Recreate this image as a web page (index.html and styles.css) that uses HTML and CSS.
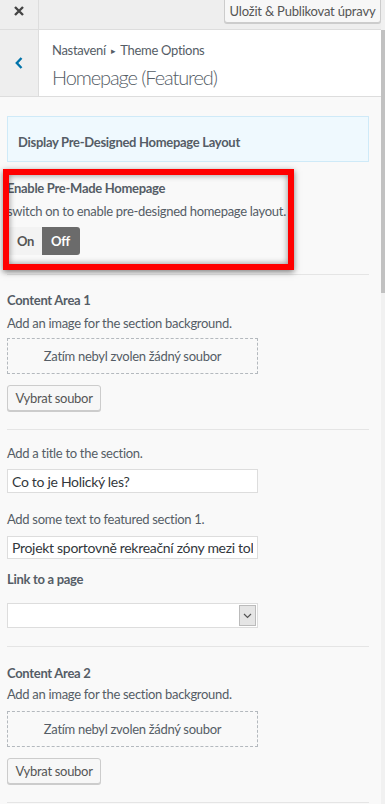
FILE: index.html
```html
<!DOCTYPE html>
<html lang="cs">
<head>
<meta charset="utf-8">
<title>Customizer</title>
<link rel="stylesheet" href="styles.css">
</head>
<body>
<div class="app">
  <div class="topbar">
    <button class="close" aria-label="Zavřít">
      <svg width="12" height="12" viewBox="0 0 12 12"><path d="M2 2 L10 10 M10 2 L2 10" stroke="#444" stroke-width="2.4" stroke-linecap="butt"/></svg>
    </button>
    <div class="topbar-fill"></div>
    <button class="publish">Uložit &amp; Publikovat úpravy</button>
  </div>
  <div class="header">
    <button class="back" aria-label="Zpět">
      <svg width="10" height="14" viewBox="0 0 10 14"><path d="M7.5 2 L2.8 7 L7.5 12" fill="none" stroke="#0073aa" stroke-width="2.4"/></svg>
    </button>
    <div class="header-text">
      <div class="crumb">Nastavení <span class="tri">▸</span> Theme Options</div>
      <div class="title">Homepage (Featured)</div>
    </div>
  </div>
  <div class="panel">
    <div class="notice">Display Pre-Designed Homepage Layout</div>

    <div class="group g-enable">
      <div class="label">Enable Pre-Made Homepage</div>
      <div class="desc d-tight">switch on to enable pre-designed homepage layout.</div>
      <div class="toggle"><span class="on">On</span><span class="off">Off</span></div>
      <div class="annot"></div>
    </div>

    <div class="group g-area1">
      <div class="label">Content Area 1</div>
      <div class="desc d-tight">Add an image for the section background.</div>
      <div class="drop">Zatím nebyl zvolen žádný soubor</div>
      <button class="btn">Vybrat soubor</button>
    </div>

    <div class="group g-fields">
      <div class="desc">Add a title to the section.</div>
      <input class="field f1" type="text" value="Co to je Holický les?">
      <div class="desc d-second">Add some text to featured section 1.</div>
      <input class="field f2" type="text" value="Projekt sportovně rekreační zóny mezi tolerancí">
      <div class="label l-link">Link to a page</div>
      <div class="select"><span class="select-val"></span><span class="select-arrow"><svg width="9" height="6" viewBox="0 0 9 6"><path d="M1 1 L4.5 4.5 L8 1" fill="none" stroke="#555" stroke-width="1.2"/></svg></span></div>
    </div>

    <div class="group g-area2">
      <div class="label">Content Area 2</div>
      <div class="desc d-tighter">Add an image for the section background.</div>
      <div class="drop drop2">Zatím nebyl zvolen žádný soubor</div>
      <button class="btn">Vybrat soubor</button>
    </div>
  </div>
  <div class="scrolltrack"><div class="thumb"></div></div>
</div>
</body>
</html>
```
FILE: styles.css
```css
* { box-sizing: border-box; }
html, body { margin: 0; padding: 0; }
body {
  background: #f9f9f9;
  font-family: "Lato", "Liberation Sans", sans-serif;
  font-size: 13px;
  letter-spacing: -0.3px;
  color: #555d66;
  overflow: hidden;
}
.app {
  position: relative;
  width: 385px;
  height: 804px;
  overflow: hidden;
  background: #f9f9f9;
}
.topbar {
  display: flex;
  height: 30px;
  background: #eeeeee;
  border-bottom: 1px solid #dddddd;
}
.close {
  width: 39px;
  height: 29px;
  border: 0;
  border-right: 1px solid #dddddd;
  background: #eeeeee;
  padding: 0 0 8px 0;
  display: flex;
  align-items: center;
  justify-content: center;
}
.topbar-fill { flex: 1; }
.publish {
  margin: -1px 4px 0 0;
  width: 157px;
  height: 24px;
  border: 1px solid #cccccc;
  border-radius: 0 0 3px 3px;
  background: #f7f7f7;
  box-shadow: 0 1px 0 #cccccc;
  font-family: "Lato", "Liberation Sans", sans-serif;
  font-size: 13px;
  letter-spacing: -0.2px;
  color: #555555;
  padding: 0 0 1px 0;
}
.header {
  display: flex;
  height: 67px;
  width: 381px;
  background: #ffffff;
  border-bottom: 1px solid #dddddd;
}
.back {
  width: 39px;
  border: 0;
  border-right: 1px solid #dddddd;
  background: #eeeeee;
  display: flex;
  align-items: center;
  justify-content: center;
  padding: 0;
}
.header-text {
  padding: 11px 0 0 13px;
}
.crumb {
  font-size: 13px;
  line-height: 18px;
  color: #555d66;
}
.tri { font-size: 9px; vertical-align: 1px; margin: 0 2px; }
.title {
  margin-top: 5px;
  font-size: 20px;
  font-weight: 300;
  letter-spacing: -1.1px;
  line-height: 24px;
  color: #555d66;
}
.panel {
  width: 381px;
  padding: 19px 12px 0 7px;
}
.notice {
  height: 46px;
  background: #eff9fe;
  border: 1px solid #cfeaf8;
  padding: 16px 0 0 10px;
  font-weight: 700;
  line-height: 18px;
  color: #555d66;
}
.group {
  position: relative;
  border-bottom: 1px solid #e5e5e5;
}
.label {
  font-weight: 700;
  line-height: 18px;
  color: #555d66;
}
.desc {
  line-height: 18px;
  color: #555d66;
}
.d-tight { margin-top: 5px; }
.d-tighter { margin-top: 3px; }
.g-enable { padding: 17px 0 19px 0; }
.toggle {
  display: flex;
  width: 72px;
  height: 28px;
  margin: 7px 0 0 1px;
  border-radius: 3px;
  overflow: hidden;
  font-weight: 700;
  line-height: 28px;
}
.toggle .on {
  width: 34px;
  background: #f3f3f3;
  color: #555555;
  padding-left: 9px;
}
.toggle .off {
  flex: 1;
  background: #6b6b6b;
  color: #ffffff;
  padding-left: 9px;
}
.annot {
  position: absolute;
  left: -4px;
  top: 7px;
  width: 291px;
  height: 101px;
  border: 6px solid #ff0000;
  box-shadow: 0 2px 6px rgba(0,0,0,0.5), inset 0 0 6px rgba(0,0,0,0.45);
  pointer-events: none;
}
.g-area1 { padding: 16px 0 18px 0; }
.g-area2 { padding: 17px 0 18px 0; }
.drop {
  width: 251px;
  height: 36px;
  margin-top: 6px;
  border: 1px dashed #b4b9be;
  text-align: center;
  line-height: 34px;
  color: #555d66;
}
.drop2 { margin-top: 8px; }
.btn {
  display: block;
  margin-top: 11px;
  width: 94px;
  height: 26px;
  border: 1px solid #cccccc;
  border-radius: 3px;
  background: #f7f7f7;
  box-shadow: 0 1px 0 #cccccc;
  font-family: "Lato", "Liberation Sans", sans-serif;
  font-size: 13px;
  letter-spacing: -0.3px;
  color: #555555;
  padding: 0 0 1px 0;
}
.g-fields { padding: 14px 0 18px 0; }
.field {
  display: block;
  width: 251px;
  border: 1px solid #dddddd;
  background: #ffffff;
  font-family: "Lato", "Liberation Sans", sans-serif;
  font-size: 14px;
  letter-spacing: -0.3px;
  color: #32373c;
  padding: 0 4px;
  outline: none;
}
.f1 { height: 24px; margin-top: 7px; }
.d-second { margin-top: 17px; }
.f2 { height: 23px; margin-top: 8px; }
.l-link { margin-top: 11px; }
.select {
  display: flex;
  width: 251px;
  height: 25px;
  margin-top: 15px;
  border: 1px solid #dddddd;
  background: #ffffff;
}
.select-val { flex: 1; }
.select-arrow {
  width: 17px;
  margin: 1px;
  background: #e5e5e5;
  border: 1px solid #bbbbbb;
  display: flex;
  align-items: center;
  justify-content: center;
}
.scrolltrack {
  position: absolute;
  right: 0;
  top: 20px;
  width: 4px;
  height: 784px;
  background: #f1f1f1;
}
.thumb {
  margin-top: 10px;
  height: 263px;
  background: #c1c1c1;
}
```
